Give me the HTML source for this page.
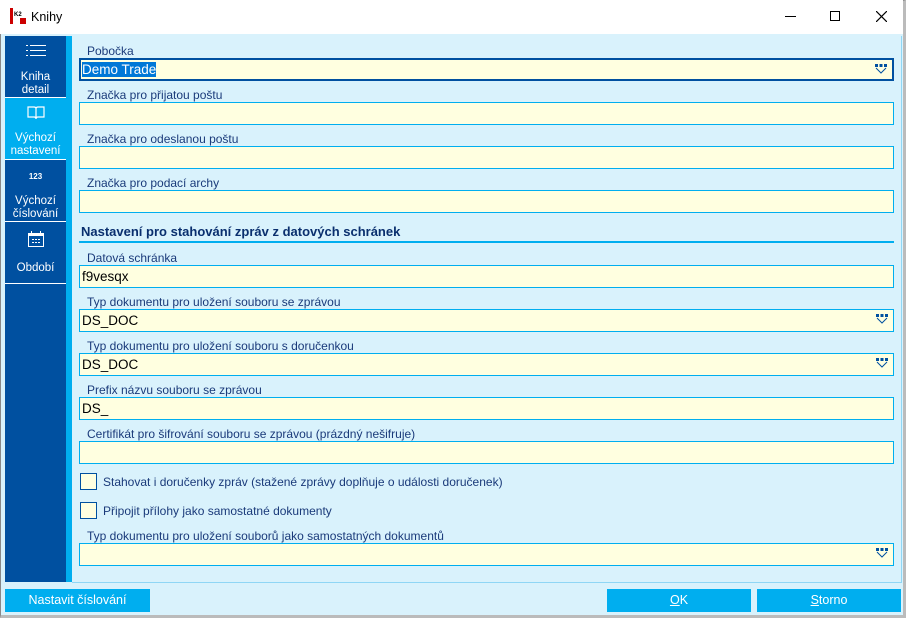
<!DOCTYPE html>
<html><head><meta charset="utf-8"><style>
*{box-sizing:border-box;margin:0;padding:0}
body{width:906px;height:618px;background:#fff;font-family:"Liberation Sans","DejaVu Sans",sans-serif;position:relative;overflow:hidden}
.win{position:absolute;left:0;top:0;width:906px;height:618px;border:1px solid #888;border-right:3px solid #bbb;border-bottom:3px solid #bbb}
.title{position:absolute;left:0;top:0;width:903px;height:34px;background:#fff}
.body{position:absolute;left:1px;top:34px;width:902px;height:581px;background:#d9f2fc}
.side{position:absolute;left:5px;top:36px;width:61px;height:546px;background:#0050a0}
.strip{position:absolute;left:66px;top:36px;width:6px;height:546px;background:#00aeef}
.content{position:absolute;left:72px;top:36px;width:830px;height:547px;border-right:1px solid #8fd6f5;border-bottom:1px solid #8fd6f5}
.item{position:absolute;left:5px;width:61px;height:61px;color:#fff;font-size:11.5px;text-align:center;line-height:13px;border-bottom:1px solid #fff}
.lbl{position:absolute;left:87px;font-size:12px;color:#1a3a7a}
.inp{position:absolute;left:79px;width:815px;height:23px;background:#ffffe0;border:1px solid #00aeef;font-size:13.5px;color:#000;padding:3px 2px}
.dd{position:absolute;right:5px;top:4px}
.cb{position:absolute;left:80px;width:17px;height:17px;border:1px solid #0050a0;background:#ffffe0}
.cbl{position:absolute;left:103px;font-size:12px;color:#1a3a7a}
.btn{position:absolute;top:589px;height:23px;background:#00aeef;color:#fff;font-size:12.5px;text-align:center;line-height:23px}
</style></head><body>
<div class="win"></div>
<div class="title">
 <div style="position:absolute;left:10px;top:8px;width:16px;height:16px;background:#fff;border-left:3px solid #c00"><div style="position:absolute;left:1px;top:4px;font-size:6px;font-weight:bold;color:#000">K2</div><div style="position:absolute;right:0;bottom:0;width:6px;height:6px;background:#c00"></div></div>
 <div style="position:absolute;left:31px;top:10px;font-size:12.5px;color:#000">Knihy</div>
 <div style="position:absolute;left:785px;top:16px;width:11px;height:1px;background:#000"></div>
 <div style="position:absolute;left:830px;top:11px;width:10px;height:10px;border:1px solid #000"></div>
 <svg style="position:absolute;left:876px;top:11px" width="11" height="11"><path d="M0 0L11 11M11 0L0 11" stroke="#000" stroke-width="1.2"/></svg>
</div>
<div class="body"></div>
<div class="side"></div>
<div class="strip"></div>
<div class="content"></div>
<div class="item" style="top:36px;height:62px"><svg style="margin-top:8px" width="20" height="14"><g fill="#fff"><rect x="0" y="1" width="2" height="1"/><rect x="4" y="1" width="16" height="1"/><rect x="0" y="6" width="2" height="1"/><rect x="4" y="6" width="16" height="1"/><rect x="0" y="11" width="2" height="1"/><rect x="4" y="11" width="16" height="1"/></g></svg><div style="margin-top:9px">Kniha<br>detail</div></div>
<div class="item" style="top:98px;height:62px;background:#00aeef"><svg style="margin-top:8px" width="18" height="14"><path d="M1 1H7Q9 1 9 3V13Q9 11 7 11H1ZM17 1H11Q9 1 9 3V13Q9 11 11 11H17Z" fill="none" stroke="#fff" stroke-width="1.2"/></svg><div style="margin-top:8px">Výchozí<br>nastavení</div></div>
<div class="item" style="top:160px;height:62px"><div style="font-size:8px;margin-top:10px;font-weight:bold">123</div><div style="margin-top:12px">Výchozí<br>číslování</div></div>
<div class="item" style="top:222px;height:62px"><svg style="margin-top:9px" width="16" height="16"><rect x="0.5" y="2.5" width="15" height="13" fill="none" stroke="#fff"/><rect x="0" y="2" width="16" height="3" fill="#fff"/><rect x="3" y="0" width="1" height="3" fill="#fff"/><rect x="12" y="0" width="1" height="3" fill="#fff"/><g fill="#fff"><rect x="4" y="8" width="2" height="1"/><rect x="7" y="8" width="2" height="1"/><rect x="10" y="8" width="2" height="1"/><rect x="4" y="11" width="2" height="1"/><rect x="7" y="11" width="2" height="1"/><rect x="10" y="11" width="2" height="1"/></g></svg><div style="margin-top:11px">Období</div></div>

<div class="lbl" style="top:44px">Pobočka</div>
<div class="inp" style="top:58px;border:2px solid #0050a0;padding:2px 1px"><span style="background:#0078d7;color:#fff">Demo Trade</span><svg class="dd" width="12" height="10"><g fill="#0050a0"><rect x="0" y="0" width="3" height="3"/><rect x="4.5" y="0" width="3" height="3"/><rect x="9" y="0" width="3" height="3"/></g><path d="M1 4L6 9L11 4" fill="none" stroke="#0050a0"/></svg></div>
<div class="lbl" style="top:88px">Značka pro přijatou poštu</div>
<div class="inp" style="top:102px"></div>
<div class="lbl" style="top:132px">Značka pro odeslanou poštu</div>
<div class="inp" style="top:146px"></div>
<div class="lbl" style="top:176px">Značka pro podací archy</div>
<div class="inp" style="top:190px"></div>
<div style="position:absolute;left:81px;top:224px;font-size:13px;font-weight:bold;color:#0a2f6e">Nastavení pro stahování zpráv z datových schránek</div>
<div style="position:absolute;left:79px;top:241px;width:815px;height:2px;background:#00aeef"></div>
<div class="lbl" style="top:251px">Datová schránka</div>
<div class="inp" style="top:265px">f9vesqx</div>
<div class="lbl" style="top:295px">Typ dokumentu pro uložení souboru se zprávou</div>
<div class="inp" style="top:309px">DS_DOC<svg class="dd" width="12" height="10"><g fill="#0050a0"><rect x="0" y="0" width="3" height="3"/><rect x="4.5" y="0" width="3" height="3"/><rect x="9" y="0" width="3" height="3"/></g><path d="M1 4L6 9L11 4" fill="none" stroke="#0050a0"/></svg></div>
<div class="lbl" style="top:339px">Typ dokumentu pro uložení souboru s doručenkou</div>
<div class="inp" style="top:353px">DS_DOC<svg class="dd" width="12" height="10"><g fill="#0050a0"><rect x="0" y="0" width="3" height="3"/><rect x="4.5" y="0" width="3" height="3"/><rect x="9" y="0" width="3" height="3"/></g><path d="M1 4L6 9L11 4" fill="none" stroke="#0050a0"/></svg></div>
<div class="lbl" style="top:383px">Prefix názvu souboru se zprávou</div>
<div class="inp" style="top:397px">DS_</div>
<div class="lbl" style="top:427px">Certifikát pro šifrování souboru se zprávou (prázdný nešifruje)</div>
<div class="inp" style="top:441px"></div>
<div class="cb" style="top:473px"></div>
<div class="cbl" style="top:475px">Stahovat i doručenky zpráv (stažené zprávy doplňuje o události doručenek)</div>
<div class="cb" style="top:502px"></div>
<div class="cbl" style="top:504px">Připojit přílohy jako samostatné dokumenty</div>
<div class="lbl" style="top:529px">Typ dokumentu pro uložení souborů jako samostatných dokumentů</div>
<div class="inp" style="top:543px"><svg class="dd" width="12" height="10"><g fill="#0050a0"><rect x="0" y="0" width="3" height="3"/><rect x="4.5" y="0" width="3" height="3"/><rect x="9" y="0" width="3" height="3"/></g><path d="M1 4L6 9L11 4" fill="none" stroke="#0050a0"/></svg></div>

<div class="btn" style="left:5px;width:145px">Nastavit číslování</div>
<div class="btn" style="left:607px;width:144px"><u>O</u>K</div>
<div class="btn" style="left:757px;width:144px"><u>S</u>torno</div>
</body></html>
